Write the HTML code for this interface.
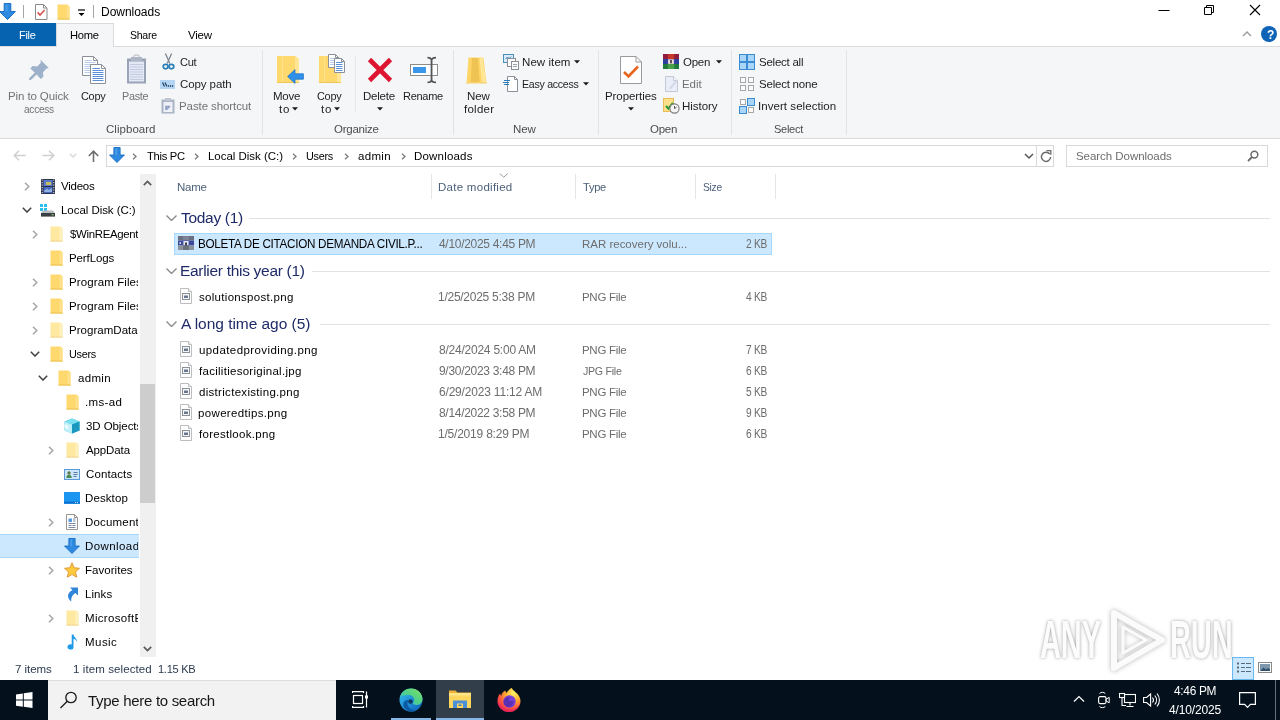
<!DOCTYPE html>
<html lang="en"><head><meta charset="utf-8"><title>Downloads</title>
<style>
html,body{margin:0;padding:0}
body{width:1280px;height:720px;overflow:hidden;background:#fff;position:relative;font-family:"Liberation Sans", sans-serif;font-size:12px}
#s{position:absolute;left:0;top:0;width:1280px;height:720px;overflow:hidden;will-change:transform}
#s>div,#s>span,#s>svg{position:absolute;display:block}
#s>span{white-space:pre;transform-origin:0 50%}
</style></head><body><div id="s">
<div style="left:0px;top:47px;width:1280px;height:91px;background:#f5f6f7;"></div>
<div style="left:0px;top:46px;width:1280px;height:1px;background:#dadbdc;"></div>
<div style="left:0px;top:138px;width:1280px;height:1px;background:#dadbdc;"></div>
<div style="left:0px;top:23px;width:56px;height:23px;background:#0563b0;"></div>
<div style="left:56px;top:23px;width:58px;height:24px;background:#f5f6f7;border:1px solid #dadbdc;border-bottom:none;box-sizing:border-box"></div>
<div style="left:262px;top:50px;width:1px;height:85px;background:#e2e3e4;"></div>
<div style="left:453px;top:50px;width:1px;height:85px;background:#e2e3e4;"></div>
<div style="left:598px;top:50px;width:1px;height:85px;background:#e2e3e4;"></div>
<div style="left:731px;top:50px;width:1px;height:85px;background:#e2e3e4;"></div>
<div style="left:846px;top:50px;width:1px;height:85px;background:#e2e3e4;"></div>
<div style="left:355px;top:56px;width:1px;height:56px;background:#e6e7e8;"></div>
<div style="left:106px;top:145px;width:931px;height:22px;border:1px solid #d9d9d9;box-sizing:border-box;background:#fff"></div>
<div style="left:1036px;top:145px;width:18px;height:22px;border:1px solid #d9d9d9;box-sizing:border-box;background:#fff"></div>
<div style="left:1066px;top:145px;width:202px;height:22px;border:1px solid #d9d9d9;box-sizing:border-box;background:#fff"></div>
<div style="left:140px;top:174px;width:16px;height:483px;background:#f0f0f0;"></div>
<div style="left:140px;top:384px;width:15px;height:119px;background:#cdcdcd;"></div>
<div style="left:0;top:534px;width:139px;height:24px;background:#cce8ff;border-top:1px solid #a6d8ff;border-bottom:1px solid #a6d8ff;box-sizing:border-box"></div>
<div style="left:431px;top:174px;width:1px;height:25px;background:#e5e5e5;"></div>
<div style="left:575px;top:174px;width:1px;height:25px;background:#e5e5e5;"></div>
<div style="left:695px;top:174px;width:1px;height:25px;background:#e5e5e5;"></div>
<div style="left:775px;top:174px;width:1px;height:25px;background:#e5e5e5;"></div>
<div style="left:249px;top:218px;width:1021px;height:1px;background:#e2e2e2;"></div>
<div style="left:312px;top:271px;width:958px;height:1px;background:#e2e2e2;"></div>
<div style="left:320px;top:324px;width:950px;height:1px;background:#e2e2e2;"></div>
<div style="left:174px;top:233px;width:598px;height:22px;background:#cce8ff;border:1px solid #a6d8ff;box-sizing:border-box"></div>
<div style="left:1232px;top:657px;width:22px;height:23px;background:#cce8ff;border:1px solid #66b8ee;box-sizing:border-box"></div>
<div style="left:0px;top:680px;width:1280px;height:40px;background:#04111c;"></div>
<div style="left:48px;top:680px;width:288px;height:40px;background:#f2f2f2;border-top:1px solid #dedede;box-sizing:border-box;"></div>
<div style="left:436px;top:680px;width:48px;height:40px;background:#323f4a;"></div>
<div style="left:391px;top:718px;width:40px;height:2px;background:#85b6e6;"></div>
<div style="left:436px;top:718px;width:48px;height:2px;background:#85b6e6;"></div>
<div style="left:1275px;top:680px;width:1px;height:40px;background:#6a737b;"></div>
<svg style="left:1106px;top:605px;filter:drop-shadow(0 0 2.5px rgba(0,0,0,.3))" width="64" height="70" viewBox="0 0 64 70"><path d="M8 8L56 35 8 63z" fill="none" stroke="#fbfbfb" stroke-width="6" stroke-linejoin="round"/><path d="M17 22L40 35 17 48z" fill="none" stroke="#fbfbfb" stroke-width="3" stroke-linejoin="round"/></svg>
<svg style="left:-1px;top:3px" width="17" height="17" viewBox="0 0 17 17" ><path d="M5.2 0.5h6.6v8h4.6L8.5 16.5 0.6 8.5h4.6z" fill="#2d8ae0" stroke="#1b6fc4" stroke-width="1" stroke-linejoin="round"/><path d="M6.6 1.6h2v7h-2z" fill="#5aa8ee" opacity=".6"/></svg>
<div style="left:23px;top:5px;width:1px;height:13px;background:#a6a6a6;"></div>
<svg style="left:35px;top:4px" width="13" height="16" viewBox="0 0 13 16" ><path d="M0.5 0.5h8l3.5 3.5v11.5h-11.5z" fill="#fff" stroke="#8a8a8a"/><path d="M8.5 0.5v3.5h3.5" fill="none" stroke="#8a8a8a"/><path d="M2.6 8.4l2.4 2.6 4.6-5" fill="none" stroke="#d9534a" stroke-width="1.6"/></svg>
<svg style="left:57px;top:4px" width="13" height="16" viewBox="0 0 13 16" ><path d="M0.5 0.5h10l2 2v13h-12z" fill="#ffd86e"/><path d="M9.5 1v14.5h3V3z" fill="#ffe08a"/><path d="M0.5 15h12" stroke="#e8c050" stroke-width="1"/></svg>
<svg style="left:78px;top:9px" width="8" height="8" viewBox="0 0 8 8" ><path d="M0 1h7" stroke="#000" stroke-width="1.2"/><path d="M0.5 4h6L3.5 7z" fill="#000"/></svg>
<div style="left:93px;top:5px;width:1px;height:13px;background:#a6a6a6;"></div>
<svg style="left:1158px;top:4px" width="12" height="12" viewBox="0 0 12 12" ><path d="M0.5 6.5h11" stroke="#000" stroke-width="1"/></svg>
<svg style="left:1203px;top:4px" width="12" height="12" viewBox="0 0 12 12" ><path d="M1.5 3.5h7v7h-7z" fill="none" stroke="#000" stroke-width="1"/><path d="M3.5 3.5v-2h7v7h-2" fill="none" stroke="#000" stroke-width="1"/></svg>
<svg style="left:1249px;top:4px" width="12" height="12" viewBox="0 0 12 12" ><path d="M1 1l10 10M11 1L1 11" stroke="#000" stroke-width="1.1"/></svg>
<svg style="left:1242px;top:30px" width="10" height="8" viewBox="0 0 10 8" ><path d="M1 6l4-4 4 4" fill="none" stroke="#9a9a9a" stroke-width="1.4"/></svg>
<div style="left:1261px;top:26px;width:16px;height:16px;border-radius:8px;background:#0f64b8"></div>
<svg style="left:28px;top:59px" width="22" height="22" viewBox="0 0 22 22" ><g fill="#9db1cb"><path d="M12.5 1.2l8.3 8.3-2.2 0.6-3.6 3.6 0.4 4.6-2.6 2.2-4.2-4.4-5.4 5.2-2.2 0.4 0.4-2.2 5.4-5.2-4.4-4.2 2.2-2.6 4.6 0.4 3.6-3.6z" transform="translate(0,-0.5)"/></g></svg>
<svg style="left:82px;top:56px" width="16" height="20" viewBox="0 0 16 20" ><path d="M0.5 0.5h11l4 4v15h-15z" fill="#fff" stroke="#8a8f98"/><path d="M11.5 0.5v4h4" fill="none" stroke="#8a8f98"/><path d="M2.5 4.5H10" stroke="#b9cdea" stroke-width="1"/><path d="M2.5 6.5H13.5" stroke="#b9cdea" stroke-width="1"/><path d="M2.5 8.5H13.5" stroke="#b9cdea" stroke-width="1"/><path d="M2.5 10.5H13.5" stroke="#b9cdea" stroke-width="1"/><path d="M2.5 12.5H13.5" stroke="#b9cdea" stroke-width="1"/><path d="M2.5 14.5H13.5" stroke="#b9cdea" stroke-width="1"/><path d="M2.5 16.5H13.5" stroke="#b9cdea" stroke-width="1"/></svg>
<svg style="left:90px;top:64px" width="16" height="20" viewBox="0 0 16 20" ><path d="M0.5 0.5h11l4 4v15h-15z" fill="#fff" stroke="#8a8f98"/><path d="M11.5 0.5v4h4" fill="none" stroke="#8a8f98"/><path d="M2.5 4.5H10" stroke="#5b8fd8" stroke-width="1"/><path d="M2.5 6.5H13.5" stroke="#5b8fd8" stroke-width="1"/><path d="M2.5 8.5H13.5" stroke="#5b8fd8" stroke-width="1"/><path d="M2.5 10.5H13.5" stroke="#5b8fd8" stroke-width="1"/><path d="M2.5 12.5H13.5" stroke="#5b8fd8" stroke-width="1"/><path d="M2.5 14.5H13.5" stroke="#5b8fd8" stroke-width="1"/><path d="M2.5 16.5H13.5" stroke="#5b8fd8" stroke-width="1"/></svg>
<svg style="left:126px;top:54px" width="21" height="30" viewBox="0 0 21 30" ><path d="M7 4.5a3.5 3.5 0 0 1 7 0" fill="none" stroke="#c9ccd3" stroke-width="1.5"/><rect x="1" y="4.5" width="19" height="25" fill="#9aa3b6"/><rect x="3" y="7.5" width="15" height="20" fill="#e3e8f5"/><rect x="5" y="3" width="11" height="4" fill="#aeb5c4"/><path d="M4 10.5H17" stroke="#c3cbe0" stroke-width="1"/><path d="M4 13.0H17" stroke="#c3cbe0" stroke-width="1"/><path d="M4 15.5H17" stroke="#c3cbe0" stroke-width="1"/><path d="M4 18.0H17" stroke="#c3cbe0" stroke-width="1"/><path d="M4 20.5H17" stroke="#c3cbe0" stroke-width="1"/><path d="M4 23.0H17" stroke="#c3cbe0" stroke-width="1"/><path d="M4 25.5H17" stroke="#c3cbe0" stroke-width="1"/></svg>
<svg style="left:162px;top:53px" width="13" height="17" viewBox="0 0 13 17" ><path d="M9.6 0.6L5.2 10.6M3.4 0.6l4.4 10" stroke="#7e8792" stroke-width="1.3" fill="none"/><ellipse cx="3.6" cy="13.6" rx="2.4" ry="2.2" fill="none" stroke="#2a7fb9" stroke-width="1.7"/><ellipse cx="9.4" cy="13.6" rx="2.4" ry="2.2" fill="none" stroke="#2a7fb9" stroke-width="1.7"/></svg>
<svg style="left:160px;top:80px" width="15" height="9" viewBox="0 0 15 9" ><rect x="0" y="0" width="15" height="9" fill="#b5d6f2"/><path d="M2.5 2.5l2 4M5 2.5l2 4" stroke="#1f3f66" stroke-width="1.2"/><path d="M8 6h1.2M10 6h1.2M12 6h1.2" stroke="#1f3f66" stroke-width="1.3"/></svg>
<svg style="left:161px;top:98px" width="14" height="16" viewBox="0 0 14 16" ><rect x="0.5" y="1.5" width="13" height="14" fill="#aab4c6"/><rect x="4" y="0" width="6" height="3" fill="#bfc6d2"/><rect x="2.5" y="4" width="9" height="10" fill="#eef1f8"/><path d="M5 12V8.5h3.5M9 8l-3.5 3.5" stroke="#8f9fc2" stroke-width="1.6" fill="none"/></svg>
<svg style="left:277px;top:56px" width="23" height="27" viewBox="0 0 23 27" ><path d="M0 0h18l4 3v24H0z" fill="#ffd86e"/><path d="M18 0l4 3v24h-4z" fill="#ffe594"/><path d="M5.5 1v25" stroke="#ffe390" stroke-width="1"/><path d="M0 26.5h22" stroke="#edc75a" stroke-width="1"/></svg>
<svg style="left:287px;top:69px" width="17" height="15" viewBox="0 0 17 15" ><path d="M8 0.6v4.2h8.4v5.4H8v4.2L0.6 7.5z" fill="#2e90ea" stroke="#2278c8" stroke-width="0.8" stroke-linejoin="round"/></svg>
<svg style="left:319px;top:56px" width="23" height="27" viewBox="0 0 23 27" ><path d="M0 0h18l4 3v24H0z" fill="#ffd86e"/><path d="M18 0l4 3v24h-4z" fill="#ffe594"/><path d="M5.5 1v25" stroke="#ffe390" stroke-width="1"/><path d="M0 26.5h22" stroke="#edc75a" stroke-width="1"/></svg>
<svg style="left:328px;top:54px" width="11" height="14" viewBox="0 0 11 14" ><path d="M0.5 0.5h7l3 3v10h-10z" fill="#fff" stroke="#8a8f98"/><path d="M7.5 0.5v3h3" fill="none" stroke="#8a8f98"/><path d="M2 4.5H8.5" stroke="#b9cdea" stroke-width="1"/><path d="M2 6.5H8.5" stroke="#b9cdea" stroke-width="1"/><path d="M2 8.5H8.5" stroke="#b9cdea" stroke-width="1"/><path d="M2 10.5H8.5" stroke="#b9cdea" stroke-width="1"/></svg>
<svg style="left:334px;top:58px" width="11" height="15" viewBox="0 0 11 15" ><path d="M0.5 0.5h7l3 3v11h-10z" fill="#fff" stroke="#8a8f98"/><path d="M7.5 0.5v3h3" fill="none" stroke="#8a8f98"/><path d="M2 4.5H8.5" stroke="#5b8fd8" stroke-width="1"/><path d="M2 6.5H8.5" stroke="#5b8fd8" stroke-width="1"/><path d="M2 8.5H8.5" stroke="#5b8fd8" stroke-width="1"/><path d="M2 10.5H8.5" stroke="#5b8fd8" stroke-width="1"/><path d="M2 12.5H8.5" stroke="#5b8fd8" stroke-width="1"/></svg>
<svg style="left:292px;top:107px" width="6" height="4" viewBox="0 0 6 4" ><path d="M0 0.2h6L3 3.6z" fill="#1a1a1a"/></svg>
<svg style="left:334px;top:107px" width="6" height="4" viewBox="0 0 6 4" ><path d="M0 0.2h6L3 3.6z" fill="#1a1a1a"/></svg>
<svg style="left:377px;top:107px" width="6" height="4" viewBox="0 0 6 4" ><path d="M0 0.2h6L3 3.6z" fill="#1a1a1a"/></svg>
<svg style="left:366px;top:56px" width="28" height="28" viewBox="0 0 28 28" ><path d="M3.5 3.5l21 21M24.5 3.5l-21 21" stroke="#de1530" stroke-width="4.6" fill="none"/></svg>
<svg style="left:409px;top:56px" width="30" height="28" viewBox="0 0 30 28" ><rect x="1.5" y="8.5" width="27" height="11" fill="#fff" stroke="#8d8d8d"/><rect x="4" y="11" width="13" height="6" fill="#3a96e8"/><path d="M18.5 1.6c2.6 0 4 1 4 3v18.8c0 2-1.4 3-4 3M27 1.6c-2.6 0-4.4 1-4.4 3v18.8c0 2 1.8 3 4.4 3" fill="none" stroke="#555" stroke-width="1.7"/></svg>
<svg style="left:465px;top:57px" width="23" height="27" viewBox="0 0 23 27" ><path d="M3.5 0.5h14l1 1L21.5 26H1.5z" fill="#ffd568"/><path d="M7 1h6l1.6 24H5.6z" fill="#e9bc4c" opacity=".75"/><path d="M14.5 1h3l3.6 24.6h-4z" fill="#ffe699"/><path d="M1 26h21" stroke="#f3cf6a" stroke-width="1"/></svg>
<svg style="left:503px;top:54px" width="16" height="16" viewBox="0 0 16 16" ><rect x="0.5" y="0.5" width="10" height="8" fill="#d8ecfb" stroke="#4a90b8"/><path d="M2.5 5l2-2 1.5 1.5 2-2" stroke="#4a7fa8" fill="none"/><rect x="4.5" y="4.500" width="8" height="8" fill="#fff" stroke="#8a8f98"/><rect x="8.5" y="7.500" width="7" height="8" fill="#fff" stroke="#8a8f98"/><path d="M10 10.500h4M10 12.500h4" stroke="#9aa0a8"/></svg>
<svg style="left:503px;top:76px" width="16" height="16" viewBox="0 0 16 16" ><path d="M4.500 0.500h7l3 3v12h-10z" fill="#fff" stroke="#8a8f98"/><path d="M11.500 0.500v3h3" fill="none" stroke="#8a8f98"/><path d="M1 4.500h6M0 6.500h6M1 8.500h5" stroke="#2a7fc0" stroke-width="1"/></svg>
<svg style="left:574px;top:60px" width="6" height="4" viewBox="0 0 6 4" ><path d="M0 0.2h6L3 3.6z" fill="#1a1a1a"/></svg>
<svg style="left:583px;top:82px" width="6" height="4" viewBox="0 0 6 4" ><path d="M0 0.2h6L3 3.6z" fill="#1a1a1a"/></svg>
<svg style="left:620px;top:56px" width="22" height="28" viewBox="0 0 22 28" ><path d="M0.500 0.500h15.500l5.500 5.500v21.500h-21z" fill="#fff" stroke="#9a9a9a"/><path d="M16 0.500v5.500h5.500" fill="none" stroke="#9a9a9a"/><path d="M4 16l4.500 4.500L18 10.500" fill="none" stroke="#e8661c" stroke-width="2.6"/></svg>
<svg style="left:628px;top:107px" width="6" height="4" viewBox="0 0 6 4" ><path d="M0 0.2h6L3 3.6z" fill="#1a1a1a"/></svg>
<svg style="left:663px;top:54px" width="16" height="15" viewBox="0 0 16 15" ><rect x="0" y="0.00" width="16" height="5.00" fill="#8e1d3e"/><rect x="4.80" y="0.00" width="6.40" height="5.00" fill="#c7372a"/><rect x="0" y="5.00" width="16" height="5.00" fill="#2f3f9e"/><rect x="4.80" y="5.00" width="6.40" height="5.00" fill="#6a4ab0"/><rect x="0" y="10.00" width="16" height="5.00" fill="#1f7a3c"/><rect x="4.80" y="10.00" width="6.40" height="5.00" fill="#4aa04a"/><rect x="5.12" y="5.40" width="5.76" height="4.50" fill="#e8e0d8"/><rect x="7.04" y="6.00" width="1.92" height="3.30" fill="#5a4a50"/></svg>
<svg style="left:664px;top:76px" width="15" height="16" viewBox="0 0 15 16" ><path d="M1.500 0.500h8l4 4v11h-12z" fill="#e9eef8" stroke="#c2c8d6"/><path d="M9.500 0.500v4h4" fill="#f8f9fc" stroke="#c2c8d6"/><path d="M5 12l7-8 1.500 1.500-7 8z" fill="#d3d9e8"/></svg>
<svg style="left:663px;top:98px" width="17" height="16" viewBox="0 0 17 16" ><rect x="0.5" y="0.5" width="10" height="13" fill="#ffe08a" stroke="#e9bd55"/><path d="M3 8l2.500 2.500L10 5" stroke="#2e9a3a" stroke-width="2.2" fill="none"/><circle cx="11.5" cy="10.5" r="4.600" fill="#f4f4f4" stroke="#7a7a7a" stroke-width="1.1"/><path d="M11.500 8v2.500l2-1.200" stroke="#555" stroke-width="1" fill="none"/></svg>
<svg style="left:716px;top:60px" width="6" height="4" viewBox="0 0 6 4" ><path d="M0 0.2h6L3 3.6z" fill="#1a1a1a"/></svg>
<svg style="left:739px;top:54px" width="16" height="16" viewBox="0 0 16 16" ><rect x="0.5" y="0.5" width="7" height="7" fill="#a9d5f9" stroke="#3b8cd4"/><rect x="8.5" y="0.5" width="7" height="7" fill="#a9d5f9" stroke="#3b8cd4"/><rect x="0.5" y="8.5" width="7" height="7" fill="#a9d5f9" stroke="#3b8cd4"/><rect x="8.5" y="8.5" width="7" height="7" fill="#a9d5f9" stroke="#3b8cd4"/></svg>
<svg style="left:739px;top:76px" width="16" height="16" viewBox="0 0 16 16" ><rect x="1.5" y="1.5" width="5" height="5" fill="#fbfbfb" stroke="#a8a8a8"/><rect x="9.5" y="1.5" width="5" height="5" fill="#fbfbfb" stroke="#a8a8a8"/><rect x="1.5" y="9.5" width="5" height="5" fill="#fbfbfb" stroke="#a8a8a8"/><rect x="9.5" y="9.5" width="5" height="5" fill="#fbfbfb" stroke="#a8a8a8"/></svg>
<svg style="left:739px;top:98px" width="16" height="16" viewBox="0 0 16 16" ><rect x="1.5" y="1.5" width="5" height="5" fill="#fbfbfb" stroke="#a8a8a8"/><rect x="8.5" y="0.5" width="7" height="7" fill="#a9d5f9" stroke="#3b8cd4"/><rect x="0.5" y="8.5" width="7" height="7" fill="#a9d5f9" stroke="#3b8cd4"/><rect x="9.5" y="9.5" width="5" height="5" fill="#fbfbfb" stroke="#a8a8a8"/></svg>
<svg style="left:13px;top:150px" width="13" height="11" viewBox="0 0 13 11" ><path d="M6 0.800L1.200 5.500 6 10.200M1.500 5.500H12.500" fill="none" stroke="#cfcfcf" stroke-width="1.5"/></svg>
<svg style="left:42px;top:150px" width="13" height="11" viewBox="0 0 13 11" ><path d="M7 0.800l4.800 4.700L7 10.200M11.500 5.500H0.500" fill="none" stroke="#cfcfcf" stroke-width="1.5"/></svg>
<svg style="left:69px;top:153px" width="8" height="5" viewBox="0 0 8 5" ><path d="M0.800 0.800l3.200 3.200 3.200-3.200" fill="none" stroke="#d6d6d6" stroke-width="1.3"/></svg>
<svg style="left:88px;top:150px" width="11" height="12" viewBox="0 0 11 12" ><path d="M0.800 6L5.500 1.200 10.200 6M5.500 1.500V12" fill="none" stroke="#6e6e6e" stroke-width="1.6"/></svg>
<svg style="left:109px;top:147px" width="16" height="16" viewBox="0 0 17 17" ><path d="M5.2 0.5h6.6v8h4.6L8.5 16.5 0.6 8.5h4.6z" fill="#2d8ae0" stroke="#1b6fc4" stroke-width="1" stroke-linejoin="round"/><path d="M6.6 1.6h2v7h-2z" fill="#5aa8ee" opacity=".6"/></svg>
<svg style="left:132px;top:153px" width="5" height="7" viewBox="0 0 5 7" ><path d="M1 0.800l3 2.700-3 2.700" fill="none" stroke="#7a7a7a" stroke-width="1.300"/></svg>
<svg style="left:194px;top:153px" width="5" height="7" viewBox="0 0 5 7" ><path d="M1 0.800l3 2.700-3 2.700" fill="none" stroke="#7a7a7a" stroke-width="1.300"/></svg>
<svg style="left:292px;top:153px" width="5" height="7" viewBox="0 0 5 7" ><path d="M1 0.800l3 2.700-3 2.700" fill="none" stroke="#7a7a7a" stroke-width="1.300"/></svg>
<svg style="left:343.5px;top:153px" width="5" height="7" viewBox="0 0 5 7" ><path d="M1 0.800l3 2.700-3 2.700" fill="none" stroke="#7a7a7a" stroke-width="1.300"/></svg>
<svg style="left:400.5px;top:153px" width="5" height="7" viewBox="0 0 5 7" ><path d="M1 0.800l3 2.700-3 2.700" fill="none" stroke="#7a7a7a" stroke-width="1.300"/></svg>
<svg style="left:1024px;top:153px" width="10" height="7" viewBox="0 0 10 7" ><path d="M1 1l4 4 4-4" fill="none" stroke="#555" stroke-width="1.500"/></svg>
<svg style="left:1040px;top:150px" width="12" height="13" viewBox="0 0 12 13" ><path d="M9.800 4.200A4.600 4.600 0 1 0 10.600 7" fill="none" stroke="#6a6a6a" stroke-width="1.400"/><path d="M6.500 0.500h4.300v4.300" fill="none" stroke="#6a6a6a" stroke-width="1.300"/></svg>
<svg style="left:1247px;top:150px" width="12" height="12" viewBox="0 0 12 12" ><circle cx="7.400" cy="4.600" r="3.400" fill="none" stroke="#6a6a6a" stroke-width="1.500"/><path d="M5 7L1 11" stroke="#6a6a6a" stroke-width="1.800"/></svg>
<svg style="left:24px;top:182.0px" width="6" height="9" viewBox="0 0 6 9" ><path d="M1 0.800l3.800 3.700L1 8.200" fill="none" stroke="#a6a6a6" stroke-width="1.500"/></svg>
<svg style="left:22px;top:207px" width="10" height="6" viewBox="0 0 10 6" ><path d="M0.800 0.800L5 5 9.200 0.800" fill="none" stroke="#404040" stroke-width="1.500"/></svg>
<svg style="left:32px;top:230.0px" width="6" height="9" viewBox="0 0 6 9" ><path d="M1 0.800l3.800 3.700L1 8.200" fill="none" stroke="#a6a6a6" stroke-width="1.500"/></svg>
<svg style="left:32px;top:278.0px" width="6" height="9" viewBox="0 0 6 9" ><path d="M1 0.800l3.800 3.700L1 8.200" fill="none" stroke="#a6a6a6" stroke-width="1.500"/></svg>
<svg style="left:32px;top:302.0px" width="6" height="9" viewBox="0 0 6 9" ><path d="M1 0.800l3.800 3.700L1 8.200" fill="none" stroke="#a6a6a6" stroke-width="1.500"/></svg>
<svg style="left:32px;top:326.0px" width="6" height="9" viewBox="0 0 6 9" ><path d="M1 0.800l3.800 3.700L1 8.200" fill="none" stroke="#a6a6a6" stroke-width="1.500"/></svg>
<svg style="left:30px;top:351px" width="10" height="6" viewBox="0 0 10 6" ><path d="M0.800 0.800L5 5 9.200 0.800" fill="none" stroke="#404040" stroke-width="1.500"/></svg>
<svg style="left:38px;top:375px" width="10" height="6" viewBox="0 0 10 6" ><path d="M0.800 0.800L5 5 9.200 0.800" fill="none" stroke="#404040" stroke-width="1.500"/></svg>
<svg style="left:48px;top:446.0px" width="6" height="9" viewBox="0 0 6 9" ><path d="M1 0.800l3.800 3.700L1 8.200" fill="none" stroke="#a6a6a6" stroke-width="1.500"/></svg>
<svg style="left:48px;top:518.0px" width="6" height="9" viewBox="0 0 6 9" ><path d="M1 0.800l3.800 3.700L1 8.200" fill="none" stroke="#a6a6a6" stroke-width="1.500"/></svg>
<svg style="left:48px;top:566.0px" width="6" height="9" viewBox="0 0 6 9" ><path d="M1 0.800l3.800 3.700L1 8.200" fill="none" stroke="#a6a6a6" stroke-width="1.500"/></svg>
<svg style="left:48px;top:614.0px" width="6" height="9" viewBox="0 0 6 9" ><path d="M1 0.800l3.800 3.700L1 8.200" fill="none" stroke="#a6a6a6" stroke-width="1.500"/></svg>
<svg style="left:143px;top:180px" width="9" height="6" viewBox="0 0 9 6" ><path d="M0.800 5.200L4.500 1.500 8.200 5.200" fill="none" stroke="#5a5a5a" stroke-width="1.700"/></svg>
<svg style="left:143px;top:646px" width="9" height="6" viewBox="0 0 9 6" ><path d="M0.800 0.800L4.500 4.500 8.200 0.800" fill="none" stroke="#5a5a5a" stroke-width="1.700"/></svg>
<svg style="left:41px;top:179px" width="14" height="15" viewBox="0 0 14 15" ><rect x="0" y="0" width="14" height="15" fill="#2a3350"/><rect x="2.500" y="1" width="9" height="6" fill="#5b79c8"/><rect x="2.500" y="8" width="9" height="6" fill="#4766b8"/><path d="M5 3h5v3H5z" fill="#c8c060"/><path d="M3 12l3-2.500 2 1.500 3-2v4H3z" fill="#8fb0e8"/><path d="M1.200 0.500v14M12.800 0.500v14" stroke="#e8e4c8" stroke-width="1" stroke-dasharray="1.200 1.300"/></svg>
<svg style="left:40px;top:204px" width="16" height="13" viewBox="0 0 16 13" ><rect x="0" y="0" width="3" height="3" fill="#28c0e8"/><rect x="4" y="0" width="3" height="3" fill="#28c0e8"/><rect x="0" y="4" width="3" height="3" fill="#28c0e8"/><rect x="4" y="4" width="3" height="3" fill="#28c0e8"/><path d="M3 6.500h10l2 2.500H1z" fill="#b8bcc0"/><rect x="1" y="9" width="14" height="3.600" fill="#3a3f44"/><rect x="11.500" y="10.300" width="2.200" height="1" fill="#9ad868"/></svg>
<svg style="left:50px;top:226px" width="13" height="16" viewBox="0 0 13 16" ><path d="M0.5 0.5h10l2 2v13h-12z" fill="#ffe8a0"/><path d="M9.5 1v14.5h3V3z" fill="#fff0c0"/><path d="M0.5 15h12" stroke="#f0d890" stroke-width="1"/></svg>
<svg style="left:50px;top:250px" width="13" height="16" viewBox="0 0 13 16" ><path d="M0.5 0.5h10l2 2v13h-12z" fill="#ffd86e"/><path d="M9.5 1v14.5h3V3z" fill="#ffe08a"/><path d="M0.5 15h12" stroke="#e8c050" stroke-width="1"/></svg>
<svg style="left:50px;top:274px" width="13" height="16" viewBox="0 0 13 16" ><path d="M0.5 0.5h10l2 2v13h-12z" fill="#ffd86e"/><path d="M9.5 1v14.5h3V3z" fill="#ffe08a"/><path d="M0.5 15h12" stroke="#e8c050" stroke-width="1"/></svg>
<svg style="left:50px;top:298px" width="13" height="16" viewBox="0 0 13 16" ><path d="M0.5 0.5h10l2 2v13h-12z" fill="#ffd86e"/><path d="M9.5 1v14.5h3V3z" fill="#ffe08a"/><path d="M0.5 15h12" stroke="#e8c050" stroke-width="1"/></svg>
<svg style="left:50px;top:322px" width="13" height="16" viewBox="0 0 13 16" ><path d="M0.5 0.5h10l2 2v13h-12z" fill="#ffe8a0"/><path d="M9.5 1v14.5h3V3z" fill="#fff0c0"/><path d="M0.5 15h12" stroke="#f0d890" stroke-width="1"/></svg>
<svg style="left:50px;top:346px" width="13" height="16" viewBox="0 0 13 16" ><path d="M0.5 0.5h10l2 2v13h-12z" fill="#ffd86e"/><path d="M9.5 1v14.5h3V3z" fill="#ffe08a"/><path d="M0.5 15h12" stroke="#e8c050" stroke-width="1"/></svg>
<svg style="left:58px;top:370px" width="13" height="16" viewBox="0 0 13 16" ><path d="M0.5 0.5h10l2 2v13h-12z" fill="#ffd86e"/><path d="M9.5 1v14.5h3V3z" fill="#ffe08a"/><path d="M0.5 15h12" stroke="#e8c050" stroke-width="1"/></svg>
<svg style="left:66px;top:394px" width="13" height="16" viewBox="0 0 13 16" ><path d="M0.5 0.5h10l2 2v13h-12z" fill="#ffd86e"/><path d="M9.5 1v14.5h3V3z" fill="#ffe08a"/><path d="M0.5 15h12" stroke="#e8c050" stroke-width="1"/></svg>
<svg style="left:66px;top:442px" width="13" height="16" viewBox="0 0 13 16" ><path d="M0.5 0.5h10l2 2v13h-12z" fill="#ffe8a0"/><path d="M9.5 1v14.5h3V3z" fill="#fff0c0"/><path d="M0.5 15h12" stroke="#f0d890" stroke-width="1"/></svg>
<svg style="left:66px;top:610px" width="13" height="16" viewBox="0 0 13 16" ><path d="M0.5 0.5h10l2 2v13h-12z" fill="#ffe8a0"/><path d="M9.5 1v14.5h3V3z" fill="#fff0c0"/><path d="M0.5 15h12" stroke="#f0d890" stroke-width="1"/></svg>
<svg style="left:64px;top:418px" width="16" height="16" viewBox="0 0 16 16" ><path d="M8 0.500l7.500 3v9L8 15.500 0.500 12.500v-9z" fill="#35b8d8"/><path d="M8 0.500l7.500 3L8 6.500 0.500 3.500z" fill="#7ae0f0"/><path d="M0.500 3.500L8 6.500v9L0.500 12.500z" fill="#bff0f8"/><path d="M0.500 6l4 1.500v4l-4-1.500z" fill="#e8fafc"/><path d="M8 6.500l7.500-3v9L8 15.500z" fill="#1a98c0"/></svg>
<svg style="left:64px;top:469px" width="16" height="11" viewBox="0 0 16 11" ><rect x="0.500" y="0.500" width="15" height="10" fill="#cfe6fa" stroke="#5a9ad8"/><circle cx="5" cy="4" r="1.700" fill="#5a7a4a"/><path d="M2.300 9c0-2.200 1.200-3.200 2.700-3.200S7.700 6.800 7.700 9z" fill="#4a8a58"/><path d="M9.500 3.500h4M9.500 5.500h4M9.500 7.500h3" stroke="#5a7aa8" stroke-width="1"/></svg>
<svg style="left:64px;top:492px" width="16" height="12" viewBox="0 0 16 12" ><rect x="0" y="0" width="16" height="12" fill="#1a95f0"/><path d="M0 10.500h16" stroke="#0f6cc8" stroke-width="1.600"/><path d="M11 10.500h4" stroke="#d8ecff" stroke-width="1" stroke-dasharray="1 1"/></svg>
<svg style="left:66px;top:514px" width="12" height="16" viewBox="0 0 12 16" ><path d="M0.500 0.500h8l3 3v12h-11z" fill="#fff" stroke="#9a9590"/><path d="M8.500 0.500v3h3" fill="none" stroke="#9a9590"/><path d="M2.500 4.500h3.500v3.500H2.500z" fill="#5a9ad8"/><path d="M7 5h2.500M7 7h2.500M2.500 9.500h7M2.500 11.500h3M6.500 11.500h3M2.500 13.500h7" stroke="#7a8aa0" stroke-width="1"/></svg>
<svg style="left:64px;top:537.5px" width="16" height="16" viewBox="0 0 17 17" ><path d="M5.2 0.5h6.6v8h4.6L8.5 16.5 0.6 8.5h4.6z" fill="#2d8ae0" stroke="#1b6fc4" stroke-width="1" stroke-linejoin="round"/><path d="M6.6 1.6h2v7h-2z" fill="#5aa8ee" opacity=".6"/></svg>
<svg style="left:64px;top:562px" width="16" height="16" viewBox="0 0 16 16" ><path d="M8 0.800l2.200 5 5.300 0.500-4 3.600 1.200 5.300L8 12.400l-4.700 2.800 1.200-5.300-4-3.600 5.300-0.500z" fill="#ffcb3d" stroke="#e09a3a" stroke-width="1" stroke-linejoin="round"/></svg>
<svg style="left:66px;top:587px" width="12" height="15" viewBox="0 0 12 15" ><path d="M4 0.500h8v8l-2.600-2.600C6.500 7.500 5 10 5.200 14.500 1 11 0.500 6.500 6.500 3z" fill="#2f86d8"/></svg>
<svg style="left:67px;top:634px" width="11" height="16" viewBox="0 0 11 16" ><path d="M6.500 0.500c0.500 3 3.500 4 3.800 7.500-1.500-2.500-2.800-3-3.800-3v8a3 2.600 0 1 1-1.800-2.400V0.500z" fill="#1e9ae8"/></svg>
<svg style="left:499px;top:173px" width="10" height="5" viewBox="0 0 10 5" ><path d="M0.800 0.500l4 3.700 4-3.700" fill="none" stroke="#9a9a9a" stroke-width="1"/></svg>
<svg style="left:166px;top:215px" width="11" height="6" viewBox="0 0 11 6" ><path d="M0.500 0.500l5 5 5-5" fill="none" stroke="#8a8a8a" stroke-width="1.400"/></svg>
<svg style="left:166px;top:268px" width="11" height="6" viewBox="0 0 11 6" ><path d="M0.500 0.500l5 5 5-5" fill="none" stroke="#8a8a8a" stroke-width="1.400"/></svg>
<svg style="left:166px;top:321px" width="11" height="6" viewBox="0 0 11 6" ><path d="M0.500 0.500l5 5 5-5" fill="none" stroke="#8a8a8a" stroke-width="1.400"/></svg>
<svg style="left:178px;top:236px" width="16" height="14" viewBox="0 0 16 14" ><rect x="0" y="0" width="16" height="4.500" fill="#6a7080"/><rect x="5" y="0" width="6" height="4.500" fill="#7c8494"/><rect x="0" y="4.500" width="16" height="5" fill="#3d4a9c"/><rect x="5" y="4.500" width="6" height="5" fill="#5a62b0"/><rect x="0" y="9.500" width="16" height="4.500" fill="#8a929c"/><rect x="5" y="9.500" width="6" height="4.500" fill="#6a727c"/><rect x="5.500" y="5" width="5" height="4" fill="#e6e8f2"/><rect x="7" y="6.500" width="2" height="3" fill="#3a3f55"/><rect x="1.500" y="6" width="1.500" height="2" fill="#cfd4f0"/></svg>
<svg style="left:180px;top:288px" width="12" height="16" viewBox="0 0 12 16" ><path d="M0.500 0.500h8l3 3v12h-11z" fill="#fff" stroke="#bdbdbd"/><path d="M8.500 0.500v3h3" fill="#f2f2f2" stroke="#bdbdbd"/><rect x="2.500" y="5.500" width="7" height="6" fill="#f4f6f8" stroke="#8a9098" stroke-width="1"/><rect x="4" y="7.500" width="4" height="2.500" fill="#6a7690"/></svg>
<svg style="left:180px;top:341px" width="12" height="16" viewBox="0 0 12 16" ><path d="M0.500 0.500h8l3 3v12h-11z" fill="#fff" stroke="#bdbdbd"/><path d="M8.500 0.500v3h3" fill="#f2f2f2" stroke="#bdbdbd"/><rect x="2.500" y="5.500" width="7" height="6" fill="#f4f6f8" stroke="#8a9098" stroke-width="1"/><rect x="4" y="7.500" width="4" height="2.500" fill="#6a7690"/></svg>
<svg style="left:180px;top:362px" width="12" height="16" viewBox="0 0 12 16" ><path d="M0.500 0.500h8l3 3v12h-11z" fill="#fff" stroke="#bdbdbd"/><path d="M8.500 0.500v3h3" fill="#f2f2f2" stroke="#bdbdbd"/><rect x="2.500" y="5.500" width="7" height="6" fill="#f4f6f8" stroke="#8a9098" stroke-width="1"/><rect x="4" y="7.500" width="4" height="2.500" fill="#6a7690"/></svg>
<svg style="left:180px;top:383px" width="12" height="16" viewBox="0 0 12 16" ><path d="M0.500 0.500h8l3 3v12h-11z" fill="#fff" stroke="#bdbdbd"/><path d="M8.500 0.500v3h3" fill="#f2f2f2" stroke="#bdbdbd"/><rect x="2.500" y="5.500" width="7" height="6" fill="#f4f6f8" stroke="#8a9098" stroke-width="1"/><rect x="4" y="7.500" width="4" height="2.500" fill="#6a7690"/></svg>
<svg style="left:180px;top:404px" width="12" height="16" viewBox="0 0 12 16" ><path d="M0.500 0.500h8l3 3v12h-11z" fill="#fff" stroke="#bdbdbd"/><path d="M8.500 0.500v3h3" fill="#f2f2f2" stroke="#bdbdbd"/><rect x="2.500" y="5.500" width="7" height="6" fill="#f4f6f8" stroke="#8a9098" stroke-width="1"/><rect x="4" y="7.500" width="4" height="2.500" fill="#6a7690"/></svg>
<svg style="left:180px;top:425px" width="12" height="16" viewBox="0 0 12 16" ><path d="M0.500 0.500h8l3 3v12h-11z" fill="#fff" stroke="#bdbdbd"/><path d="M8.500 0.500v3h3" fill="#f2f2f2" stroke="#bdbdbd"/><rect x="2.500" y="5.500" width="7" height="6" fill="#f4f6f8" stroke="#8a9098" stroke-width="1"/><rect x="4" y="7.500" width="4" height="2.500" fill="#6a7690"/></svg>
<svg style="left:1236px;top:661px" width="16" height="14" viewBox="0 0 16 14" ><path d="M1 2.500h2M1 6.500h2M1 10.500h2" stroke="#5a6a7a" stroke-width="2"/><path d="M5 2.500h4M10 2.500h5M5 6.500h4M10 6.500h5M5 10.500h4M10 10.500h5" stroke="#5a6a7a" stroke-width="1"/></svg>
<svg style="left:1258px;top:662px" width="14" height="11" viewBox="0 0 14 11" ><rect x="0.500" y="0.500" width="13" height="10" fill="#fff" stroke="#8a8a8a"/><rect x="2" y="2" width="10" height="7" fill="#7f97ad"/><path d="M2 9l3.500-3.500 2.500 2 2-1.500 2 1.500V9z" fill="#31516e"/></svg>
<svg style="left:16px;top:692px" width="17" height="16" viewBox="0 0 17 16" ><path d="M0 2.400L6.800 1.400V7.600H0zM7.800 1.250L16.500 0V7.600H7.800zM0 8.500h6.800v6.200L0 13.700zM7.800 8.500h8.700V16l-8.700-1.250z" fill="#fff"/></svg>
<svg style="left:59px;top:690px" width="19" height="19" viewBox="0 0 19 19" ><circle cx="12" cy="7.500" r="5.200" fill="none" stroke="#1a1a1a" stroke-width="1.300"/><path d="M8.300 11.300L1.500 18" stroke="#1a1a1a" stroke-width="1.300"/></svg>
<svg style="left:352px;top:691px" width="16" height="17" viewBox="0 0 16 17" ><rect x="1.500" y="4.500" width="9" height="8" fill="none" stroke="#fff" stroke-width="1.200"/><path d="M0.500 2V0.600h11V2M0.500 15v1.400h11V15" fill="none" stroke="#fff" stroke-width="1.200"/><path d="M14.500 0.500v16" stroke="#fff" stroke-width="1.200"/><rect x="13" y="4.500" width="3" height="3" fill="#fff"/></svg>
<svg style="left:399px;top:688px" width="24" height="24" viewBox="0 0 24 24" ><defs><linearGradient id="eg1" x1="0" y1="0" x2="1" y2="1"><stop offset="0" stop-color="#35c1f1"/><stop offset="1" stop-color="#0f5fb8"/></linearGradient><linearGradient id="eg2" x1="0" y1="1" x2="1" y2="0"><stop offset="0" stop-color="#2fb8e8"/><stop offset="0.500" stop-color="#4fd08a"/><stop offset="1" stop-color="#7fe060"/></linearGradient></defs><circle cx="12" cy="12" r="11.500" fill="url(#eg1)"/><path d="M1 9.500C2.500 3.500 7 0.500 12 0.500c6.500 0 11.500 4.800 11.500 10.500 0 3.500-2.500 6-5.800 6-2.200 0-3.700-0.800-3.700-2 0-1 1.200-1.300 1.200-3.200 0-2.500-2.200-4.800-5.700-4.800C5.500 7 2.500 8 1 9.500z" fill="url(#eg2)"/><path d="M9.500 12c-1.500 1.800-1.500 5.500 1 8 2 2 5.500 2.600 8 1.500-3 3-8.500 3-12-0.500C3 17.500 3.500 12 9.500 12z" fill="#0c59a4"/><circle cx="11.500" cy="13.500" r="2.300" fill="#0a2a50" opacity=".850"/></svg>
<svg style="left:449px;top:690px" width="22" height="19" viewBox="0 0 22 19" ><path d="M0 0.500h6.500l2 2H22v1H0z" fill="#f0b232"/><rect x="0" y="3" width="22" height="15" fill="#ffd75e"/><path d="M0 3h22v2.500H0z" fill="#ffe488"/><path d="M4 10.500h14V18H4z" fill="#4a90d8"/><path d="M8 13.500h6V18H8z" fill="#ffd75e"/><path d="M9.500 14.500h3v1.500h-3z" fill="#3a78c0"/></svg>
<svg style="left:497px;top:688px" width="24" height="24" viewBox="0 0 24 24" ><defs><radialGradient id="ff1" cx="0.700" cy="0.200" r="0.950"><stop offset="0" stop-color="#fff36a"/><stop offset="0.350" stop-color="#ffb02e"/><stop offset="0.650" stop-color="#ff5a3c"/><stop offset="1" stop-color="#e8205e"/></radialGradient></defs><path d="M12 2c1-1.500 2.800-2 2.800-2 0.500 1.500 2 2.500 3.800 4.200C21.500 6.500 23.500 9.500 23.500 13c0 6-5 11-11.500 11S0.500 19 0.500 13c0-3 0.800-5.500 2.700-7.500 0 1.200 0.500 2 1 2.500C4.500 5.500 6 3.500 8.500 2.500c0 1 0.500 2 1 2.500 0.600-1.200 1.500-2.300 2.500-3z" fill="url(#ff1)"/><circle cx="12.500" cy="13.500" r="6.200" fill="#7a3fd8"/><path d="M7 12c1.500-2.500 4-3.500 6.500-3-1.500 0.800-2 1.800-1.500 3 0.800 1.500 3 1.500 4 0.500 1 3-1 6.500-4.500 6.500-3 0-5.500-3-4.500-7z" fill="#5a2fb0"/><path d="M0.500 13c0 6 5 11 11.500 11s11.500-5 11.500-11c0 4.500-4 8.500-10 8.500S2.500 18 0.500 13z" fill="#e8205e" opacity=".700"/></svg>
<svg style="left:1073px;top:695px" width="12" height="8" viewBox="0 0 12 8" ><path d="M1 6.500l5-5 5 5" fill="none" stroke="#fff" stroke-width="1.200"/></svg>
<svg style="left:1098px;top:691px" width="12" height="18" viewBox="0 0 12 18" ><rect x="0.600" y="5.600" width="7.400" height="7" rx="1.500" fill="none" stroke="#fff" stroke-width="1.100"/><path d="M8 8.200l3.200-1.800v5.400L8 10z" fill="none" stroke="#fff" stroke-width="1"/><path d="M1.500 2.500c1.600-1.600 4.200-1.600 5.800 0M1.500 15.500c1.600 1.600 4.200 1.600 5.800 0" fill="none" stroke="#fff" stroke-width="1"/></svg>
<svg style="left:1119px;top:692px" width="17" height="16" viewBox="0 0 17 16" ><rect x="5.500" y="2.500" width="11" height="8" fill="none" stroke="#fff" stroke-width="1.100"/><path d="M11 10.500v3M7.500 14.500h7" stroke="#fff" stroke-width="1.100"/><rect x="0.500" y="1.500" width="5" height="4" fill="#06121d" stroke="#fff" stroke-width="1.100"/><path d="M3 5.500v8h4" fill="none" stroke="#fff" stroke-width="1.100"/></svg>
<svg style="left:1143px;top:692px" width="17" height="16" viewBox="0 0 17 16" ><path d="M0.600 5.500h3l4-3.500v12l-4-3.500h-3z" fill="none" stroke="#fff" stroke-width="1.100"/><path d="M9.500 5.500c1.200 1.500 1.200 3.500 0 5M11.800 3.500c2.200 2.600 2.200 6.400 0 9M14 1.500c3.200 3.800 3.200 9.200 0 13" fill="none" stroke="#fff" stroke-width="1.100"/></svg>
<svg style="left:1239px;top:692px" width="17" height="17" viewBox="0 0 17 17" ><path d="M0.600 0.600h15.800v11.800h-5l-2.900 3-2.900-3h-5z" fill="none" stroke="#fff" stroke-width="1.200"/></svg>
<span style="left:101.00px;top:4.00px;font-size:12px;line-height:17px;color:#000;letter-spacing:-0.025px;">Downloads</span>
<span style="left:19.00px;top:27.00px;font-size:11.5px;line-height:16px;color:#fff;letter-spacing:-0.300px;transform:scaleX(0.9532);">File</span>
<span style="left:70.00px;top:27.00px;font-size:11.5px;line-height:16px;color:#000;letter-spacing:-0.300px;transform:scaleX(0.9725);">Home</span>
<span style="left:130.00px;top:27.00px;font-size:11.5px;line-height:16px;color:#000;letter-spacing:-0.300px;transform:scaleX(0.9161);">Share</span>
<span style="left:188.00px;top:27.00px;font-size:11.5px;line-height:16px;color:#000;letter-spacing:-0.233px;">View</span>
<span style="left:8.00px;top:88.00px;font-size:11.5px;line-height:16px;color:#737373;letter-spacing:-0.109px;">Pin to Quick</span>
<span style="left:24.00px;top:101.00px;font-size:11.5px;line-height:16px;color:#737373;letter-spacing:-0.300px;transform:scaleX(0.8783);">access</span>
<span style="left:81.00px;top:88.00px;font-size:11.5px;line-height:16px;color:#1e1e1e;letter-spacing:-0.300px;transform:scaleX(0.9502);">Copy</span>
<span style="left:122.00px;top:88.00px;font-size:11.5px;line-height:16px;color:#737373;letter-spacing:-0.300px;transform:scaleX(0.9440);">Paste</span>
<span style="left:180.00px;top:54.00px;font-size:11.5px;line-height:16px;color:#1e1e1e;letter-spacing:-0.300px;transform:scaleX(0.9655);">Cut</span>
<span style="left:180.00px;top:76.00px;font-size:11.5px;line-height:16px;color:#1e1e1e;letter-spacing:-0.088px;">Copy path</span>
<span style="left:179.00px;top:98.00px;font-size:11.5px;line-height:16px;color:#737373;letter-spacing:-0.092px;">Paste shortcut</span>
<span style="left:106.00px;top:121.00px;font-size:11.5px;line-height:16px;color:#4d4d4d;letter-spacing:0.037px;">Clipboard</span>
<span style="left:273.00px;top:88.00px;font-size:11.5px;line-height:16px;color:#1e1e1e;letter-spacing:-0.233px;">Move</span>
<span style="left:279.00px;top:101.00px;font-size:11.5px;line-height:16px;color:#1e1e1e;letter-spacing:0.800px;">to</span>
<span style="left:317.00px;top:88.00px;font-size:11.5px;line-height:16px;color:#1e1e1e;letter-spacing:-0.300px;transform:scaleX(0.9502);">Copy</span>
<span style="left:321.00px;top:101.00px;font-size:11.5px;line-height:16px;color:#1e1e1e;letter-spacing:0.800px;">to</span>
<span style="left:363.00px;top:88.00px;font-size:11.5px;line-height:16px;color:#1e1e1e;letter-spacing:-0.240px;">Delete</span>
<span style="left:403.00px;top:88.00px;font-size:11.5px;line-height:16px;color:#1e1e1e;letter-spacing:-0.300px;transform:scaleX(0.9580);">Rename</span>
<span style="left:334.00px;top:121.00px;font-size:11.5px;line-height:16px;color:#4d4d4d;letter-spacing:-0.243px;">Organize</span>
<span style="left:467.00px;top:88.00px;font-size:11.5px;line-height:16px;color:#1e1e1e;letter-spacing:-0.100px;">New</span>
<span style="left:464.00px;top:101.00px;font-size:11.5px;line-height:16px;color:#1e1e1e;letter-spacing:0.260px;">folder</span>
<span style="left:522.00px;top:54.00px;font-size:11.5px;line-height:16px;color:#1e1e1e;letter-spacing:0.071px;">New item</span>
<span style="left:522.00px;top:76.00px;font-size:11.5px;line-height:16px;color:#1e1e1e;letter-spacing:-0.300px;transform:scaleX(0.9217);">Easy access</span>
<span style="left:513.00px;top:121.00px;font-size:11.5px;line-height:16px;color:#4d4d4d;letter-spacing:-0.100px;">New</span>
<span style="left:605.00px;top:88.00px;font-size:11.5px;line-height:16px;color:#1e1e1e;letter-spacing:-0.078px;">Properties</span>
<span style="left:683.00px;top:54.00px;font-size:11.5px;line-height:16px;color:#1e1e1e;letter-spacing:-0.233px;">Open</span>
<span style="left:682.00px;top:76.00px;font-size:11.5px;line-height:16px;color:#737373;letter-spacing:-0.067px;">Edit</span>
<span style="left:682.00px;top:98.00px;font-size:11.5px;line-height:16px;color:#1e1e1e;letter-spacing:-0.033px;">History</span>
<span style="left:650.00px;top:121.00px;font-size:11.5px;line-height:16px;color:#4d4d4d;letter-spacing:-0.233px;">Open</span>
<span style="left:759.00px;top:54.00px;font-size:11.5px;line-height:16px;color:#1e1e1e;letter-spacing:-0.244px;">Select all</span>
<span style="left:759.00px;top:76.00px;font-size:11.5px;line-height:16px;color:#1e1e1e;letter-spacing:-0.220px;">Select none</span>
<span style="left:758.00px;top:98.00px;font-size:11.5px;line-height:16px;color:#1e1e1e;letter-spacing:0.053px;">Invert selection</span>
<span style="left:774.00px;top:121.00px;font-size:11.5px;line-height:16px;color:#4d4d4d;letter-spacing:-0.300px;transform:scaleX(0.9607);">Select</span>
<span style="left:147.00px;top:148.00px;font-size:11.5px;line-height:16px;color:#000;letter-spacing:-0.300px;transform:scaleX(0.9764);">This PC</span>
<span style="left:208.00px;top:148.00px;font-size:11.5px;line-height:16px;color:#000;letter-spacing:-0.029px;">Local Disk (C:)</span>
<span style="left:306.00px;top:148.00px;font-size:11.5px;line-height:16px;color:#000;letter-spacing:-0.300px;transform:scaleX(0.9460);">Users</span>
<span style="left:358.00px;top:148.00px;font-size:11.5px;line-height:16px;color:#000;letter-spacing:0.325px;">admin</span>
<span style="left:414.00px;top:148.00px;font-size:11.5px;line-height:16px;color:#000;letter-spacing:0.188px;">Downloads</span>
<span style="left:1076.00px;top:148.00px;font-size:11.5px;line-height:16px;color:#6d6d6d;letter-spacing:-0.047px;">Search Downloads</span>
<span style="left:61.00px;top:178.00px;font-size:11.5px;line-height:16px;color:#000;letter-spacing:-0.240px;">Videos</span>
<span style="left:61.00px;top:202.00px;font-size:11.5px;line-height:16px;color:#000;letter-spacing:-0.050px;">Local Disk (C:)</span>
<span style="left:70.00px;top:226.00px;font-size:11.5px;line-height:16px;color:#000;letter-spacing:-0.300px;transform:scaleX(0.9899);width:68.90px;overflow:hidden;">$WinREAgent</span>
<span style="left:69.00px;top:250.00px;font-size:11.5px;line-height:16px;color:#000;letter-spacing:-0.100px;">PerfLogs</span>
<span style="left:69.00px;top:274.00px;font-size:11.5px;line-height:16px;color:#000;letter-spacing:0.108px;width:69.20px;overflow:hidden;">Program Files</span>
<span style="left:69.00px;top:298.00px;font-size:11.5px;line-height:16px;color:#000;letter-spacing:0.108px;width:69.20px;overflow:hidden;">Program Files</span>
<span style="left:69.00px;top:322.00px;font-size:11.5px;line-height:16px;color:#000;letter-spacing:0.030px;">ProgramData</span>
<span style="left:69.00px;top:346.00px;font-size:11.5px;line-height:16px;color:#000;letter-spacing:-0.300px;transform:scaleX(0.9460);">Users</span>
<span style="left:78.00px;top:370.00px;font-size:11.5px;line-height:16px;color:#000;letter-spacing:0.325px;">admin</span>
<span style="left:85.00px;top:394.00px;font-size:11.5px;line-height:16px;color:#000;letter-spacing:0.360px;">.ms-ad</span>
<span style="left:86.00px;top:418.00px;font-size:11.5px;line-height:16px;color:#000;letter-spacing:-0.078px;width:52.20px;overflow:hidden;">3D Objects</span>
<span style="left:86.00px;top:442.00px;font-size:11.5px;line-height:16px;color:#000;letter-spacing:-0.117px;">AppData</span>
<span style="left:86.00px;top:466.00px;font-size:11.5px;line-height:16px;color:#000;letter-spacing:0.114px;">Contacts</span>
<span style="left:85.00px;top:490.00px;font-size:11.5px;line-height:16px;color:#000;letter-spacing:0.100px;">Desktop</span>
<span style="left:85.00px;top:514.00px;font-size:11.5px;line-height:16px;color:#000;letter-spacing:0.188px;width:53.20px;overflow:hidden;">Documents</span>
<span style="left:85.00px;top:538.00px;font-size:11.5px;line-height:16px;color:#000;letter-spacing:0.412px;width:53.20px;overflow:hidden;">Downloads</span>
<span style="left:85.00px;top:562.00px;font-size:11.5px;line-height:16px;color:#000;letter-spacing:0.037px;">Favorites</span>
<span style="left:85.00px;top:586.00px;font-size:11.5px;line-height:16px;color:#000;letter-spacing:0.075px;">Links</span>
<span style="left:85.00px;top:610.00px;font-size:11.5px;line-height:16px;color:#000;letter-spacing:0.311px;width:53.20px;overflow:hidden;">MicrosoftE</span>
<span style="left:85.00px;top:634.00px;font-size:11.5px;line-height:16px;color:#000;letter-spacing:0.450px;">Music</span>
<span style="left:177.00px;top:179.00px;font-size:11.5px;line-height:16px;color:#4c607a;letter-spacing:-0.233px;">Name</span>
<span style="left:438.00px;top:179.00px;font-size:11.5px;line-height:16px;color:#4c607a;letter-spacing:0.275px;">Date modified</span>
<span style="left:583.00px;top:179.00px;font-size:11.5px;line-height:16px;color:#4c607a;letter-spacing:-0.300px;transform:scaleX(0.9668);">Type</span>
<span style="left:703.00px;top:179.00px;font-size:11.5px;line-height:16px;color:#4c607a;letter-spacing:-0.300px;transform:scaleX(0.8910);">Size</span>
<span style="left:181.00px;top:207.00px;font-size:15.5px;line-height:22px;color:#1f2b68;letter-spacing:-0.300px;">Today (1)</span>
<span style="left:180.00px;top:260.00px;font-size:15.5px;line-height:22px;color:#1f2b68;letter-spacing:-0.300px;">Earlier this year (1)</span>
<span style="left:181.00px;top:313.00px;font-size:15.5px;line-height:22px;color:#1f2b68;letter-spacing:-0.039px;">A long time ago (5)</span>
<span style="left:198.00px;top:236.00px;font-size:12px;line-height:17px;color:#000;letter-spacing:-0.300px;transform:scaleX(0.9743);">BOLETA DE CITACION DEMANDA CIVIL.P...</span>
<span style="left:439.00px;top:236.00px;font-size:12px;line-height:17px;color:#6d6d6d;letter-spacing:-0.300px;">4/10/2025 4:45 PM</span>
<span style="left:582.00px;top:236.00px;font-size:11.5px;line-height:16px;color:#6d6d6d;letter-spacing:-0.011px;">RAR recovery volu...</span>
<span style="left:746.00px;top:236.00px;font-size:12px;line-height:17px;color:#6d6d6d;letter-spacing:-0.300px;transform:scaleX(0.8486);">2 KB</span>
<span style="left:199.00px;top:289.00px;font-size:11.5px;line-height:16px;color:#000;letter-spacing:0.300px;">solutionspost.png</span>
<span style="left:438.00px;top:289.00px;font-size:12px;line-height:17px;color:#6d6d6d;letter-spacing:-0.263px;">1/25/2025 5:38 PM</span>
<span style="left:582.00px;top:289.00px;font-size:11.5px;line-height:16px;color:#6d6d6d;letter-spacing:-0.300px;">PNG File</span>
<span style="left:746.00px;top:289.00px;font-size:12px;line-height:17px;color:#6d6d6d;letter-spacing:-0.300px;transform:scaleX(0.8486);">4 KB</span>
<span style="left:199.00px;top:342.00px;font-size:11.5px;line-height:16px;color:#000;letter-spacing:0.411px;">updatedproviding.png</span>
<span style="left:439.00px;top:342.00px;font-size:12px;line-height:17px;color:#6d6d6d;letter-spacing:-0.231px;">8/24/2024 5:00 AM</span>
<span style="left:582.00px;top:342.00px;font-size:11.5px;line-height:16px;color:#6d6d6d;letter-spacing:-0.300px;">PNG File</span>
<span style="left:746.00px;top:342.00px;font-size:12px;line-height:17px;color:#6d6d6d;letter-spacing:-0.300px;transform:scaleX(0.8486);">7 KB</span>
<span style="left:199.00px;top:363.00px;font-size:11.5px;line-height:16px;color:#000;letter-spacing:0.276px;">facilitiesoriginal.jpg</span>
<span style="left:439.00px;top:363.00px;font-size:12px;line-height:17px;color:#6d6d6d;letter-spacing:-0.300px;">9/30/2023 3:48 PM</span>
<span style="left:583.00px;top:363.00px;font-size:11.5px;line-height:16px;color:#6d6d6d;letter-spacing:-0.300px;transform:scaleX(0.9260);">JPG File</span>
<span style="left:746.00px;top:363.00px;font-size:12px;line-height:17px;color:#6d6d6d;letter-spacing:-0.300px;transform:scaleX(0.8486);">6 KB</span>
<span style="left:199.00px;top:384.00px;font-size:11.5px;line-height:16px;color:#000;letter-spacing:0.305px;">districtexisting.png</span>
<span style="left:439.00px;top:384.00px;font-size:12px;line-height:17px;color:#6d6d6d;letter-spacing:-0.188px;">6/29/2023 11:12 AM</span>
<span style="left:582.00px;top:384.00px;font-size:11.5px;line-height:16px;color:#6d6d6d;letter-spacing:-0.300px;">PNG File</span>
<span style="left:746.00px;top:384.00px;font-size:12px;line-height:17px;color:#6d6d6d;letter-spacing:-0.300px;transform:scaleX(0.8486);">5 KB</span>
<span style="left:198.00px;top:405.00px;font-size:11.5px;line-height:16px;color:#000;letter-spacing:0.343px;">poweredtips.png</span>
<span style="left:439.00px;top:405.00px;font-size:12px;line-height:17px;color:#6d6d6d;letter-spacing:-0.300px;">8/14/2022 3:58 PM</span>
<span style="left:582.00px;top:405.00px;font-size:11.5px;line-height:16px;color:#6d6d6d;letter-spacing:-0.300px;">PNG File</span>
<span style="left:746.00px;top:405.00px;font-size:12px;line-height:17px;color:#6d6d6d;letter-spacing:-0.300px;transform:scaleX(0.8486);">9 KB</span>
<span style="left:199.00px;top:426.00px;font-size:11.5px;line-height:16px;color:#000;letter-spacing:0.292px;">forestlook.png</span>
<span style="left:438.00px;top:426.00px;font-size:12px;line-height:17px;color:#6d6d6d;letter-spacing:-0.213px;">1/5/2019 8:29 PM</span>
<span style="left:582.00px;top:426.00px;font-size:11.5px;line-height:16px;color:#6d6d6d;letter-spacing:-0.300px;">PNG File</span>
<span style="left:746.00px;top:426.00px;font-size:12px;line-height:17px;color:#6d6d6d;letter-spacing:-0.300px;transform:scaleX(0.8486);">6 KB</span>
<span style="left:15.00px;top:661.00px;font-size:11.5px;line-height:16px;color:#2b3b4f;letter-spacing:-0.033px;">7 items</span>
<span style="left:73.00px;top:661.00px;font-size:11.5px;line-height:16px;color:#2b3b4f;letter-spacing:0.093px;">1 item selected</span>
<span style="left:158.00px;top:661.00px;font-size:11.5px;line-height:16px;color:#2b3b4f;letter-spacing:-0.300px;transform:scaleX(0.9634);">1.15 KB</span>
<span style="left:88.00px;top:690.00px;font-size:15px;line-height:21px;color:#161616;letter-spacing:-0.300px;">Type here to search</span>
<span style="left:1174.00px;top:683.00px;font-size:12px;line-height:17px;color:#fff;letter-spacing:-0.300px;transform:scaleX(0.9905);">4:46 PM</span>
<span style="left:1169.00px;top:702.00px;font-size:12px;line-height:17px;color:#fff;letter-spacing:-0.150px;">4/10/2025</span>
<span class="wm" style="left:1040.00px;top:603.00px;font-size:53px;line-height:74px;color:#fcfcfc;font-weight:700;letter-spacing:-0.300px;transform:scaleX(0.5484);text-shadow:0 0 5px rgba(0,0,0,.36),0 0 2px rgba(0,0,0,.1);">ANY</span>
<span class="wm" style="left:1170.00px;top:603.00px;font-size:53px;line-height:74px;color:#fcfcfc;font-weight:700;letter-spacing:-0.300px;transform:scaleX(0.5493);text-shadow:0 0 5px rgba(0,0,0,.36),0 0 2px rgba(0,0,0,.1);">RUN</span>
<span style="left:1267.00px;top:27.00px;font-size:12px;line-height:17px;color:#fff;font-weight:700;">?</span>
</div></body></html>
